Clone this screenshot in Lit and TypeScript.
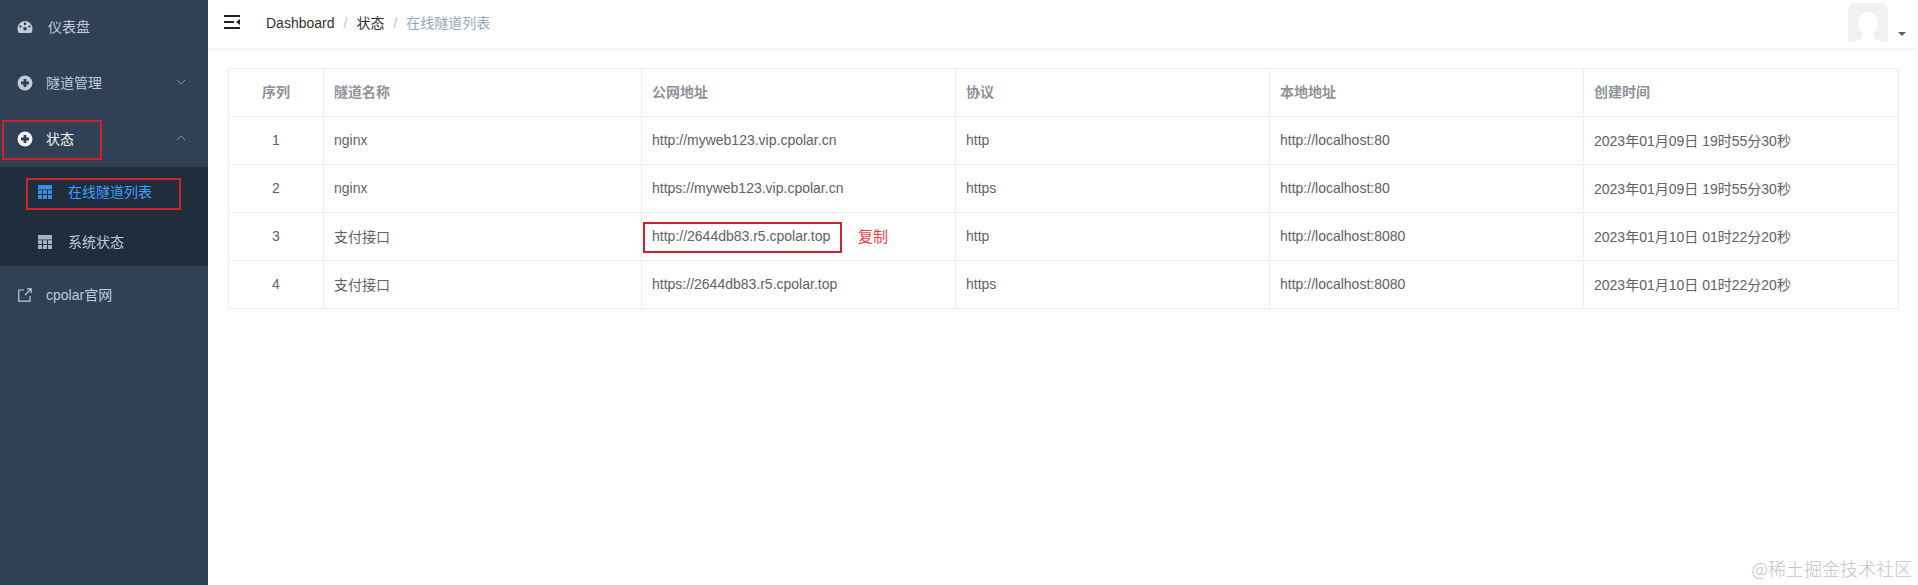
import { LitElement, html, css, svg } from "lit";
import { customElement } from "lit/decorators.js";

const rows = [
  ["1", "nginx", "http://myweb123.vip.cpolar.cn", "http", "http://localhost:80", "2023年01月09日 19时55分30秒"],
  ["2", "nginx", "https://myweb123.vip.cpolar.cn", "https", "http://localhost:80", "2023年01月09日 19时55分30秒"],
  ["3", "支付接口", "http://2644db83.r5.cpolar.top", "http", "http://localhost:8080", "2023年01月10日 01时22分20秒"],
  ["4", "支付接口", "https://2644db83.r5.cpolar.top", "https", "http://localhost:8080", "2023年01月10日 01时22分20秒"],
];
const heads = ["序列", "隧道名称", "公网地址", "协议", "本地地址", "创建时间"];

const plusIcon = svg`<svg class="ico" viewBox="0 0 16 16"><circle cx="8" cy="8" r="7.500" fill="currentColor"/><path d="M8 4v8M4 8h8" stroke="#304156" stroke-width="2.800"/></svg>`;
const gridIcon = svg`<svg class="grid" viewBox="0 0 14 14"><path fill="currentColor" d="M0 0h14v4.500H0zM0 5.300h4v3.800H0zM5 5.300h4v3.800H5zM10 5.300h4v3.800h-4zM0 10h4v4H0zM5 10h4v4H5zM10 10h4v4h-4z"/></svg>`;
const gauge = svg`<svg class="ico" viewBox="0 0 16 14"><path fill="currentColor" fill-rule="evenodd" d="M8 1a7.500 7.500 0 0 1 7.500 7.500c0 1.700-.4 3.200-1.200 4.500H1.700C.9 11.700.5 10.200.5 8.500A7.500 7.500 0 0 1 8 1zM7 2.500v2.500h2V2.500zM3 5l-1 1.500 2 1.200.9-1.500zM13 5l-2 1.200.9 1.500 2-1.200zM8 7a1.800 1.800 0 1 0 0 3.600A1.800 1.800 0 0 0 8 7z"/></svg>`;
const ext = svg`<svg class="ico ext" viewBox="0 0 14 14" fill="none" stroke="currentColor" stroke-width="1.200"><path d="M6 2H.8v11.200H12V8M7 7l6-6M9 .8h4.200V5"/></svg>`;

@customElement("app-root")
export class AppRoot extends LitElement {
  static styles = css`
    :host { display: block; height: 585px; overflow: hidden; font-family: "Liberation Sans", "Noto Sans CJK SC", sans-serif; font-size: 14px; background: #fff; }
    .page { display: flex; height: 585px; position: relative; }
    aside { width: 208px; flex: none; background: #304156; color: #bfcbd9; }
    .item { height: 56px; display: flex; align-items: center; position: relative; }
    .item.last { height: 57px; }
    .item .ico { width: 16px; height: 16px; margin: 0 0 2px 17px; flex: none; }
    .item .ext { width: 14px; height: 14px; margin: 0 0 0 18px; }
    .label-b { margin-left: 13px; }
    .item > span { position: relative; top: -2px; }
    .item > span.cp { top: -1px; margin-left: 14px; }
    .chev { position: absolute; right: 22px; top: 23px; width: 10px; height: 6px; fill: none; stroke: #7f8ea1; stroke-width: 1; }
    .on { color: #f4f4f5; }
    .sub { background: #1f2d3d; margin-top: -1px; }
    .sub .row { height: 50px; display: flex; align-items: center; padding-left: 38px; box-sizing: border-box; }
    .sub .row.second { height: 49px; }
    .grid { width: 14px; height: 14px; flex: none; opacity: .85; }
    .sub span { margin-left: 16px; position: relative; top: -1px; }
    .active { color: #409eff; }
    .red { position: absolute; border: 2px solid #d0202c; box-sizing: border-box; pointer-events: none; }
    .r1 { left: 2px; top: 120px; width: 100px; height: 40px; }
    .r2 { left: 26px; top: 178px; width: 155px; height: 32px; }
    main { flex: 1; min-width: 0; }
    header { height: 48px; display: flex; align-items: center; box-shadow: 0 1px 4px rgba(0,21,41,.08); position: relative; }
    .ham { width: 16px; height: 14px; margin: 0 0 4px 16px; flex: none; }
    .crumb { margin: 0 0 3px 26px; display: flex; align-items: baseline; color: #303133; white-space: nowrap; line-height: 20px; }
    .crumb i { font-style: normal; color: #c0c4cc; margin: 0 9px; }
    .crumb .last { color: #97a8be; }
    .avatar { position: absolute; left: 1640px; top: 3px; width: 40px; height: 40px; }
    .caret { position: absolute; left: 1690px; top: 32px; width: 0; height: 0; border: 4px solid transparent; border-top: 4px solid #5a5e66; }
    .wrap { padding: 20px 20px 0 20px; }
    table { border-collapse: collapse; width: 1670px; table-layout: fixed; color: #606266; }
    th, td { border: 1px solid #ebeef5; height: 48px; padding: 0 10px 2px; text-align: left; font-size: 14px; box-sizing: border-box; white-space: nowrap; }
    th { color: #909399; font-weight: 700; padding-bottom: 4px; }
    .c { text-align: center; }
    .addr { position: relative; }
    .box { position: absolute; left: 1px; top: 9px; width: 199px; height: 31px; border: 2px solid #d0202c; box-sizing: border-box; }
    .copy { position: absolute; left: 216px; top: 12px; color: #e2404a; font-size: 15px; }
    .mark { position: absolute; right: 6px; bottom: 4px; font-family: "Noto Sans CJK SC", sans-serif; font-size: 18px; font-weight: 300; color: #c4c4c4; }
  `;

  render() {
    return html`<div class="page">
      <aside>
        <div class="item">${gauge}<span class="label-b" style="margin-left:15px">仪表盘</span></div>
        <div class="item">${plusIcon}<span class="label-b">隧道管理</span><svg class="chev" viewBox="0 0 10 6"><path d="M1 1l4 4 4-4"/></svg></div>
        <div class="item on">${plusIcon}<span class="label-b">状态</span><svg class="chev" viewBox="0 0 10 6"><path d="M1 5l4-4 4 4"/></svg></div>
        <div class="sub">
          <div class="row active">${gridIcon}<span>在线隧道列表</span></div>
          <div class="row second">${gridIcon}<span>系统状态</span></div>
        </div>
        <div class="item last">${ext}<span class="cp">cpolar官网</span></div>
      </aside>
      <main>
        <header>
          <svg class="ham" viewBox="0 0 16 14"><path fill="#222" d="M0 0h16v2H0zM0 6h10v2H0zM0 12h16v2H0zM16 4v6l-4-3z"/></svg>
          <div class="crumb"><span>Dashboard</span><i>/</i><span>状态</span><i>/</i><span class="last">在线隧道列表</span></div>
          <svg class="avatar" viewBox="0 0 40 40"><path fill="#f1f1f1" d="M8 0h24a8 8 0 0 1 8 8v30c-4 2-10-1-14-3v-5c3-3 4-7 3-12-1-6-5-9-9-9s-8 3-9 9c-1 5 0 9 3 12v5c-4 2-10 5-14 3V8a8 8 0 0 1 8-8z"/></svg>
          <div class="caret"></div>
        </header>
        <div class="wrap">
          <table>
            <colgroup><col style="width:95px"><col style="width:318px"><col style="width:314px"><col style="width:314px"><col style="width:314px"><col style="width:315px"></colgroup>
            <thead><tr>${heads.map((h, i) => html`<th class=${i === 0 ? "c" : ""}>${h}</th>`)}</tr></thead>
            <tbody>
              ${rows.map((r) => html`<tr>
                ${r.map((v, i) => html`<td class="${i === 0 ? "c" : ""} ${i === 2 ? "addr" : ""}">${v}${i === 2 && r[0] === "3" ? html`<div class="box"></div><span class="copy">复制</span>` : ""}</td>`)}
              </tr>`)}
            </tbody>
          </table>
        </div>
      </main>
      <div class="red r1"></div>
      <div class="red r2"></div>
      <div class="mark">@稀土掘金技术社区</div>
    </div>`;
  }
}
